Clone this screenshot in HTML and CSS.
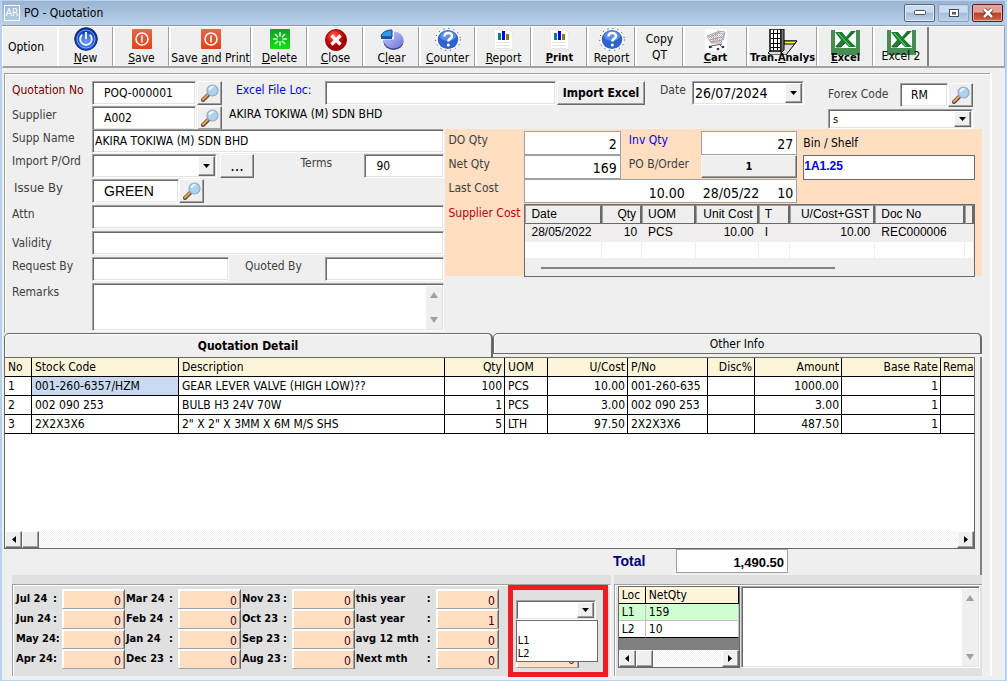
FILE: index.html
```html
<!DOCTYPE html>
<html lang="en">
<head>
<meta charset="utf-8">
<title>PO - Quotation</title>
<link rel="stylesheet" href="styles.css">
</head>
<body>
<svg class="defs" aria-hidden="true">
  <defs>
    <radialGradient id="gBlue" cx=".5" cy=".6"><stop offset="0" stop-color="#6fa0ff"/><stop offset=".6" stop-color="#2f62dc"/><stop offset="1" stop-color="#0a2f94"/></radialGradient>
    <radialGradient id="gRed" cx=".4" cy=".3"><stop offset="0" stop-color="#ff6a5c"/><stop offset=".6" stop-color="#dd1712"/><stop offset="1" stop-color="#a00604"/></radialGradient>
    <linearGradient id="gOrange" x2="0" y2="1"><stop offset="0" stop-color="#e2694a"/><stop offset="1" stop-color="#e2401a"/></linearGradient>
    <linearGradient id="gGreen" x2="0" y2="1"><stop offset="0" stop-color="#169c2c"/><stop offset="1" stop-color="#12e012"/></linearGradient>
    <linearGradient id="gPie" x2="1" y2="1"><stop offset="0" stop-color="#c9ccff"/><stop offset="1" stop-color="#6f74d8"/></linearGradient>
    <pattern id="dither" width="2" height="2" patternUnits="userSpaceOnUse"><rect width="2" height="2" fill="#1fa83a"/><rect width="1" height="1" fill="#6a746a"/><rect x="1" y="1" width="1" height="1" fill="#6a746a"/></pattern>
    <pattern id="dither2" width="2" height="2" patternUnits="userSpaceOnUse"><rect width="2" height="2" fill="#fff"/><rect width="1" height="1" fill="#aaa"/><rect x="1" y="1" width="1" height="1" fill="#ccc"/></pattern>
  </defs>
  <symbol id="i-lens" viewBox="0 0 18 18">
    <path d="M2 16l5-5" stroke="#6b4a33" stroke-width="4" stroke-linecap="round"/>
    <path d="M2 15.500l4.500-4.500" stroke="#e6a468" stroke-width="2" stroke-linecap="round"/>
    <circle cx="11.500" cy="6.500" r="5.500" fill="#a9d3f0" stroke="#9aa8b8" stroke-width="1.200"/>
    <path d="M8.500 6a3.500 3.500 0 0 1 4-3" stroke="#eaf7ff" stroke-width="2" fill="none"/>
  </symbol>
  <symbol id="i-power" viewBox="0 0 24 24">
    <circle cx="12" cy="12" r="11.300" fill="url(#gBlue)" stroke="#082c78"/>
    <circle cx="12" cy="12" r="9" fill="none" stroke="#7da9f4"/>
    <path d="M8.200 7.800a5.800 5.800 0 1 0 7.600 0M12 5v7" fill="none" stroke="#e8f2ff" stroke-width="2"/>
  </symbol>
  <symbol id="i-save" viewBox="0 0 20 20">
    <rect width="20" height="20" rx="1" fill="url(#gOrange)"/>
    <circle cx="10" cy="10" r="6" fill="none" stroke="#fff" stroke-width="1.500"/><path d="M10 6.500v7" stroke="#fff" stroke-width="1.500"/>
  </symbol>
  <symbol id="i-del" viewBox="0 0 20 20">
    <rect width="20" height="20" rx="1" fill="url(#gGreen)"/>
    <path d="M10 3v4.500M10 12.500V17M3 10h4.500M12.500 10H17M5 5l3.200 3.200M11.800 11.800L15 15M15 5l-3.200 3.200M8.200 11.800L5 15" stroke="#d9ffd9" stroke-width="1.500"/>
  </symbol>
  <symbol id="i-close" viewBox="0 0 22 22">
    <circle cx="11" cy="11" r="10.500" fill="url(#gRed)" stroke="#8d0d0a"/>
    <path d="M6.500 6.500l9 9M15.500 6.500l-9 9" stroke="#fff" stroke-width="3.200"/>
  </symbol>
  <symbol id="i-pie" viewBox="0 0 24 22">
    <ellipse cx="13.500" cy="12.500" rx="10" ry="8.500" fill="#3e418e"/>
    <ellipse cx="13.500" cy="11" rx="10" ry="8.500" fill="url(#gPie)"/>
    <path d="M14 10.500V1H3v9.500z" fill="#efefef"/>
    <path d="M12 8V1C6 1 1.500 3.500 1 7.500z" fill="#2d9be8" stroke="#17437f"/><path d="M1 7.500v2.500h11V8z" fill="#12569c"/>
  </symbol>
  <symbol id="i-help" viewBox="0 0 26 23">
    <ellipse cx="13" cy="11.500" rx="12.300" ry="11" fill="#fff" stroke="#1c2240" stroke-dasharray="1 4"/>
    <ellipse cx="13" cy="11.500" rx="10.300" ry="9.500" fill="#2f63cf"/>
    <ellipse cx="13" cy="8" rx="8" ry="5" fill="#5a8de6"/>
    <path d="M9.500 8.500c0-4.500 7.500-4.500 7.500-.500 0 2.800-3.700 2.500-3.700 5.500" fill="none" stroke="#fff" stroke-width="2.500"/><circle cx="13.300" cy="17" r="1.500" fill="#fff"/>
  </symbol>
  <symbol id="i-chart" viewBox="0 0 20 22">
    <path d="M0 0h15l4 4v17H0z" fill="#fff" stroke="#ddd"/>
    <path d="M2 13.500h14M2 16.500h14M2 19.500h14" stroke="#e4e4e4"/>
    <rect x="4" y="4" width="3" height="7" fill="#008080"/><rect x="8" y="2" width="3" height="9" fill="#00f"/><rect x="12" y="5" width="3" height="6" fill="#808000"/>
  </symbol>
  <symbol id="i-cart" viewBox="0 0 22 22">
    <rect width="22" height="22" fill="#fff"/>
    <path d="M2 7l10-4 7 2-3 9H6z" fill="url(#dither2)" stroke="#aaa"/>
    <path d="M12 2l8 1-2 8M4 8l10-4M5 11l12-3M6 13l11-2" fill="none" stroke="#89a4cf"/>
    <path d="M8 6l1 8M12 5v9" stroke="#dd9b86"/>
    <path d="M17 15l-11 2 1 2M15 16l3 3" fill="none" stroke="#555"/><circle cx="5" cy="18" r="1.300" fill="#334"/><circle cx="13" cy="20" r="1.300" fill="#334"/><circle cx="18" cy="18" r="1.300" fill="#334"/>
  </symbol>
  <symbol id="i-tran" viewBox="0 0 32 26">
    <path d="M1 24l12-12h17L19 26H4z" fill="#ddd" stroke="#000"/>
    <path d="M17 12h13l-3 3H17z" fill="#ff0" stroke="#000"/>
    <path d="M3 0h11v22H3z" fill="#fff" stroke="#000" stroke-width="1.500"/>
    <path d="M4 4.500h9M4 9.500h9M4 14.500h9M4 18.500h9M6.500 1v20M10.500 1v20" stroke="#000"/>
    <path d="M14 0h3v21l-3 3z" fill="#777" stroke="#000"/>
  </symbol>
  <symbol id="i-xl" viewBox="0 0 29 25">
    <path d="M0 0h29v25H0z" fill="url(#dither)" shape-rendering="crispEdges"/><path d="M4 0h21v18H4z" fill="#fff"/>
    <path d="M4 2h7l4 5 5-6h5l-8 8 8 8h-7l-4-4-4 4H4l6-7z" fill="#16812b"/>
    <path d="M5 17h5l4-4M17 8l6-7" stroke="#444" fill="none"/><path d="M7 3l12 13" stroke="#8dd19a"/>
  </symbol>
  <symbol id="i-down" viewBox="0 0 7 4"><path d="M0 0h7L3.500 4z"/></symbol>
  <symbol id="i-up" viewBox="0 0 8 6"><path d="M0 6h8L4 0z"/></symbol>
  <symbol id="i-fall" viewBox="0 0 8 6"><path d="M0 0h8L4 6z"/></symbol>
  <symbol id="i-left" viewBox="0 0 4 7"><path d="M4 0v7L0 3.500z"/></symbol>
  <symbol id="i-right" viewBox="0 0 4 7"><path d="M0 0v7l4-3.500z"/></symbol>
</svg>

<div class="window">
  <header class="titlebar">
    <span class="app-icon">AR</span>
    <h1>PO - Quotation</h1>
    <div class="win-buttons">
      <button class="win-btn" aria-label="Minimize"><svg width="12" height="6"><rect x=".5" y=".5" width="11" height="4" rx="1" fill="#fff" stroke="#454c5a"/></svg></button>
      <button class="win-btn dim" aria-label="Maximize"><svg width="10" height="8"><rect x=".5" y=".5" width="9" height="7" fill="#fff" stroke="#454c5a"/><rect x="3.500" y="3.500" width="3" height="1.500" fill="#9ab" stroke="#454c5a"/></svg></button>
      <button class="win-btn red" aria-label="Close window"><svg width="12" height="10"><path d="M2 1l8 8M10 1L2 9" stroke="#4b2a2a" stroke-width="4"/><path d="M2 1l8 8M10 1L2 9" stroke="#fff" stroke-width="2.500"/></svg></button>
    </div>
  </header>

  <nav class="toolbar" aria-label="Option">
    <span class="tool-title">Option</span>
    <button class="tool"><svg width="24" height="24"><use href="#i-power"/></svg><span><u>N</u>ew</span></button>
    <button class="tool"><svg width="20" height="20"><use href="#i-save"/></svg><span><u>S</u>ave</span></button>
    <button class="tool w82"><svg width="20" height="20"><use href="#i-save"/></svg><span>Save <u>a</u>nd Print</span></button>
    <button class="tool"><svg width="20" height="20"><use href="#i-del"/></svg><span><u>D</u>elete</span></button>
    <button class="tool"><svg width="22" height="22"><use href="#i-close"/></svg><span><u>C</u>lose</span></button>
    <button class="tool"><svg width="24" height="22"><use href="#i-pie"/></svg><span>C<u>l</u>ear</span></button>
    <button class="tool"><svg width="26" height="23"><use href="#i-help"/></svg><span><u>C</u>ounter</span></button>
    <button class="tool"><svg width="19" height="22" viewBox="0 0 19 22"><use href="#i-chart" width="20" height="22"/></svg><span><u>R</u>eport</span></button>
    <button class="tool strong"><svg width="19" height="22" viewBox="0 0 19 22"><use href="#i-chart" width="20" height="22"/></svg><span><u>P</u>rint</span></button>
    <button class="tool w48"><svg width="26" height="23"><use href="#i-help"/></svg><span>Report</span></button>
    <button class="tool w48 text-only"><span>Copy<br>QT</span></button>
    <button class="tool w64 strong"><svg width="22" height="22"><use href="#i-cart"/></svg><span><u>C</u>art</span></button>
    <button class="tool w70 strong"><svg width="32" height="26"><use href="#i-tran"/></svg><span>Tran.<u>A</u>nalys</span></button>
    <button class="tool strong"><svg width="29" height="25"><use href="#i-xl"/></svg><span><u>E</u>xcel</span></button>
    <button class="tool last"><svg width="29" height="25"><use href="#i-xl"/></svg><span>Excel 2</span></button>
  </nav>

  <main class="page">
    <form class="form">
      <div class="top">
        <div class="top-main">
          <div class="row">
            <label class="lab maroon" for="qno">Quotation No</label>
            <input class="box w103 pad" id="qno" value="POQ-000001">
            <button type="button" class="btn lens" aria-label="Find quotation"><svg width="18" height="18"><use href="#i-lens"/></svg></button>
            <label class="lab-in blue" for="loc">Excel File Loc:</label>
            <input class="box grow" id="loc">
            <button type="button" class="btn import">Import Excel</button>
            <label class="lab-date" for="date">Date</label>
            <span class="combo w112 big"><select id="date"><option>26/07/2024</option></select><i><svg width="7" height="4"><use href="#i-down"/></svg></i></span>
          </div>
          <div class="row">
            <label class="lab" for="sup">Supplier</label>
            <input class="box w103 pad" id="sup" value="A002">
            <button type="button" class="btn lens" aria-label="Find supplier"><svg width="18" height="18"><use href="#i-lens"/></svg></button>
            <span class="sup-name">AKIRA TOKIWA (M) SDN BHD</span>
          </div>
        </div>
        <div class="forex">
          <div class="row">
            <label class="lab-forex" for="fx">Forex Code</label>
            <input class="box w48 pad-s" id="fx" value="RM">
            <button type="button" class="btn lens" aria-label="Find currency"><svg width="18" height="18"><use href="#i-lens"/></svg></button>
          </div>
          <span class="combo low"><select aria-label="Currency name"><option>s</option></select><i><svg width="7" height="4"><use href="#i-down"/></svg></i></span>
        </div>
      </div>

      <div class="middle">
        <div class="fields">
          <div class="group tight">
            <div class="row"><label class="lab" for="sname">Supp Name</label><input class="box grow" id="sname" value="AKIRA TOKIWA (M) SDN BHD"></div>
            <div class="row">
              <label class="lab snug" for="imp">Import P/Ord</label>
              <span class="combo w125"><select id="imp"><option></option></select><i><svg width="7" height="4"><use href="#i-down"/></svg></i></span>
              <button type="button" class="btn dots">...</button>
              <label class="lab-terms" for="terms">Terms</label><input class="box w80 pad" id="terms" value="90">
            </div>
            <div class="row"><label class="lab large" for="iss">Issue By</label><input class="box w87 pad arial" id="iss" value="GREEN"><button type="button" class="btn lens" aria-label="Find issuer"><svg width="18" height="18"><use href="#i-lens"/></svg></button></div>
          </div>
          <div class="group">
            <div class="row"><label class="lab" for="attn">Attn</label><input class="box grow" id="attn"></div>
            <div class="row"><label class="lab low-lab" for="val">Validity</label><input class="box grow" id="val"></div>
            <div class="row"><label class="lab" for="req">Request By</label><input class="box w136" id="req"><label class="lab-quoted" for="quo">Quoted By</label><input class="box grow" id="quo"></div>
            <div class="row tall"><label class="lab" for="rem">Remarks</label><span class="area"><textarea id="rem"></textarea><i class="vbar"><svg width="8" height="6"><use href="#i-up"/></svg><svg width="8" height="6"><use href="#i-fall"/></svg></i></span></div>
          </div>
        </div>

        <section class="stock">
          <div class="stock-grid">
            <label for="do">DO Qty</label><input class="flat" id="do" value="2">
            <label class="blue in" for="inv">Inv Qty</label><input class="flat" id="inv" value="27">
            <label class="dark" for="bin">Bin / Shelf</label>
            <label for="net">Net Qty</label><input class="flat" id="net" value="169">
            <span class="in">PO B/Order</span><button type="button" class="btn border-btn">1</button>
            <input class="flat bin" id="bin" value="1A1.25">
            <span>Last Cost</span>
            <div class="last-cost"><span>10.00</span><span>28/05/22</span><span>10</span></div>
          </div>
          <div class="sup-cost">
            <span class="red">Supplier Cost</span>
            <div class="cost-box">
              <table class="cost">
                <colgroup><col class="c1"><col class="c2"><col class="c3"><col class="c4"><col class="c5"><col class="c6"><col class="c7"><col class="c8"></colgroup>
                <thead><tr><th>Date</th><th class="r">Qty</th><th>UOM</th><th class="r">Unit Cost</th><th>T</th><th class="r">U/Cost+GST</th><th>Doc No</th><th></th></tr></thead>
                <tbody><tr class="sel"><td>28/05/2022</td><td class="r">10</td><td>PCS</td><td class="r">10.00</td><td>I</td><td class="r">10.00</td><td>REC000006</td><td></td></tr>
                <tr><td></td><td></td><td></td><td></td><td></td><td></td><td></td><td></td></tr></tbody>
              </table>
              <div class="thin-bar"><i></i></div>
            </div>
          </div>
        </section>
      </div>
    </form>

    <div class="tabs" role="tablist">
      <button class="tab on" role="tab" aria-selected="true">Quotation Detail</button>
      <button class="tab" role="tab" aria-selected="false">Other Info</button>
    </div>

    <section class="detail">
      <div class="grid-box">
        <div class="grid-body">
          <table class="lines">
            <colgroup><col class="l1"><col class="l2"><col class="l3"><col class="l4"><col class="l5"><col class="l6"><col class="l7"><col class="l8"><col class="l9"><col class="l10"><col class="l11"></colgroup>
            <thead><tr><th>No</th><th>Stock Code</th><th>Description</th><th class="r">Qty</th><th>UOM</th><th class="r">U/Cost</th><th>P/No</th><th class="r">Disc%</th><th class="r">Amount</th><th class="r">Base Rate</th><th>Rema</th></tr></thead>
            <tbody>
              <tr><td>1</td><td class="picked">001-260-6357/HZM</td><td>GEAR LEVER VALVE (HIGH LOW)??</td><td class="r">100</td><td>PCS</td><td class="r">10.00</td><td>001-260-635</td><td></td><td class="r">1000.00</td><td class="r">1</td><td></td></tr>
              <tr><td>2</td><td>002 090 253</td><td>BULB H3 24V 70W</td><td class="r">1</td><td>PCS</td><td class="r">3.00</td><td>002 090 253</td><td></td><td class="r">3.00</td><td class="r">1</td><td></td></tr>
              <tr><td>3</td><td>2X2X3X6</td><td>2" X 2" X 3MM X 6M M/S SHS</td><td class="r">5</td><td>LTH</td><td class="r">97.50</td><td>2X2X3X6</td><td></td><td class="r">487.50</td><td class="r">1</td><td></td></tr>
            </tbody>
          </table>
        </div>
        <div class="hbar"><button class="btn" aria-label="Scroll left"><svg width="4" height="7"><use href="#i-left"/></svg></button><span class="btn thumb"></span><button class="btn end" aria-label="Scroll right"><svg width="4" height="7"><use href="#i-right"/></svg></button></div>
      </div>
      <div class="total"><label for="tot">Total</label><input class="flat" id="tot" value="1,490.50"></div>
    </section>

    <div class="bottom">
      <section class="stats">
        <div class="stats-in">
          <div class="stat-grid">
            <label for="s1">Jul 24<b>:</b></label><input id="s1" value="0"><label for="s2">Mar 24<b>:</b></label><input id="s2" value="0"><label for="s3">Nov 23<b>:</b></label><input id="s3" value="0"><label for="s4">this year<b>:</b></label><input id="s4" value="0">
            <label for="s5">Jun 24<b>:</b></label><input id="s5" value="0"><label for="s6">Feb 24<b>:</b></label><input id="s6" value="0"><label for="s7">Oct 23<b>:</b></label><input id="s7" value="0"><label for="s8">last year<b>:</b></label><input id="s8" value="1">
            <label for="s9">May 24<b>:</b></label><input id="s9" value="0"><label for="s10">Jan 24<b>:</b></label><input id="s10" value="0"><label for="s11">Sep 23<b>:</b></label><input id="s11" value="0"><label for="s12">avg 12 mth<b>:</b></label><input id="s12" value="0">
            <label for="s13">Apr 24<b>:</b></label><input id="s13" value="0"><label for="s14">Dec 23<b>:</b></label><input id="s14" value="0"><label for="s15">Aug 23<b>:</b></label><input id="s15" value="0"><label for="s16">Next mth<b>:</b></label><input id="s16" value="0">
          </div>
          <div class="marked">
            <span class="combo low"><select aria-label="Location"><option></option></select><i><svg width="7" height="4"><use href="#i-down"/></svg></i></span>
            <div class="under"><input class="peach" aria-label="Location quantity" value="0"></div>
            <select class="droplist" size="3" aria-label="Location list"><option></option><option>L1</option><option>L2</option></select>
          </div>
        </div>
      </section>
      <section class="locs">
        <div class="locs-in">
          <div class="loc-box">
            <table class="loc-table">
              <thead><tr><th class="k">Loc</th><th>NetQty</th></tr></thead>
              <tbody><tr class="green"><td>L1</td><td>159</td></tr><tr><td>L2</td><td>10</td></tr></tbody>
            </table>
            <div class="void"></div>
            <div class="hbar"><button class="btn" aria-label="Scroll left"><svg width="4" height="7"><use href="#i-left"/></svg></button><span class="btn thumb"></span><button class="btn end" aria-label="Scroll right"><svg width="4" height="7"><use href="#i-right"/></svg></button></div>
          </div>
          <span class="area"><textarea aria-label="Notes"></textarea><i class="vbar"><svg width="8" height="6"><use href="#i-up"/></svg><svg width="8" height="6"><use href="#i-fall"/></svg></i></span>
        </div>
      </section>
    </div>
  </main>
</div>
</body>
</html>
```

FILE: styles.css
```css
* { box-sizing: border-box; }
body { margin: 0; font: 12px/18px "DejaVu Sans Condensed", "Noto Sans", sans-serif; color: #000; background: #efefef; }
button, input, select, textarea { font: inherit; color: inherit; margin: 0; border-radius: 0; outline: 0; }
svg { display: block; }
.defs { position: absolute; width: 0; height: 0; }
button { padding: 0; }
table { border-collapse: separate; border-spacing: 0; table-layout: fixed; width: 100%; }
th { font-weight: 400; text-align: left; }
.r { text-align: right; }

.window { min-height: 100vh; display: flex; flex-direction: column; border: solid #b9d1ea; border-width: 1px 2px; background: #efefef; }

/* title bar */
.titlebar { display: flex; align-items: center; height: 25px; padding: 0 2px; flex: none; background: linear-gradient(#98b4d2, #b9d1ea); border-bottom: 1px solid #8a97a5; }
.titlebar h1 { margin: 0 auto 0 4px; font-size: 12px; font-weight: 400; }
.app-icon { width: 16px; height: 16px; border: 1px solid #fff; color: #fff; font-size: 10px; line-height: 14px; text-align: center; }
.win-buttons { display: flex; gap: 3px; }
.win-btn { width: 31px; height: 18px; display: flex; align-items: center; justify-content: center; border: 1px solid #55697f; border-radius: 2px; background: linear-gradient(#cbdcee 45%, #a3bcd8 50%, #bdd3ea); box-shadow: inset 0 0 0 1px #dfeaf6; }
.win-btn.dim { border-color: #8aa3c0; box-shadow: inset 0 0 0 1px #bdd0e6; }
.win-btn.red { border-color: #5b1a1f; background: linear-gradient(#e0a296 45%, #bb3a24 50%, #d3674b); box-shadow: inset 0 0 0 1px #e5aea5; }

/* toolbar */
.toolbar { display: flex; height: 42px; flex: none; margin: 0; border: solid; border-width: 1px 1px 2px; border-color: #fff #a0a0a0 #a0a0a0 #fff; }
.tool-title { width: 54px; padding: 11px 5px; }
.tool { width: 56px; min-width: 0; display: flex; flex-direction: column; justify-content: flex-end; align-items: center; border: solid; border-width: 0 1px 0 2px; border-color: #fff #a0a0a0 #fff #fff; background: #efefef; line-height: 16px; white-space: nowrap; }
.tool svg { flex: none; margin: 1px 0 -1px; }
.tool svg[height="20"] { margin-bottom: 1px; }
.tool span { position: relative; text-align: center; }
.tool.strong span { font-weight: 700; font-size: 11px; }
.tool svg[height="25"], .tool svg[height="26"] { margin-bottom: -5px; }
.w82 { width: 82px; } .w64 { width: 64px; } .w70 { width: 70px; } .tool.w48 { width: 48px; }
.tool.text-only { justify-content: center; }
.tool.last { border-right: 2px solid #808080; }
.tool.last svg { margin-bottom: -7px; }
.tool.last span { padding-bottom: 2px; }

/* shared controls */
.box { height: 24px; min-width: 0; padding: 0 2px; background: #fff; border: 1px solid; border-color: #a0a0a0 #fff #fff #a0a0a0; box-shadow: inset 1px 1px #696969, inset -1px -1px #e3e3e3; }
.pad { padding-left: 11px; } .pad-s { padding-left: 10px; }
.grow { flex: 1; }
.w48 { width: 48px; } .w80 { width: 80px; } .w87 { width: 87px; } .w103 { width: 104px; } .w136 { width: 137px; }
.arial { font: 14px "Liberation Sans", sans-serif; }
.btn { display: flex; align-items: center; justify-content: center; background: #efefef; border: 1px solid; border-color: #fff #696969 #696969 #fff; box-shadow: inset -1px -1px #a0a0a0; }
.lens { width: 25px; height: 24px; flex: none; }
.combo { position: relative; display: block; height: 24px; border: 1px solid; border-color: #a0a0a0 #fff #fff #a0a0a0; }
.combo select { appearance: none; width: 100%; height: 100%; padding: 0 18px 0 3px; border: 1px solid; border-color: #696969 #e3e3e3 #e3e3e3 #696969; background: #fff; display: block; }
.combo i { position: absolute; top: 1px; right: 1px; bottom: 1px; width: 17px; display: flex; align-items: center; justify-content: center; pointer-events: none; background: #efefef; border: 1px solid; border-color: #fff #696969 #696969 #fff; box-shadow: inset -1px -1px #a0a0a0; }
.combo.low { height: 20px; }
.combo.low select { font-size: 11px; }
.combo.big select { font-size: 14px; padding-left: 1px; }
.w112 { width: 112px; } .w125 { width: 125px; }
.flat { height: 24px; min-width: 0; width: 100%; padding: 2px 3px 0; background: #fff; border: 1px solid #a0a0a0; text-align: right; font-size: 14px; }
.area { flex: 1; display: flex; min-width: 0; background: #fff; border: 1px solid; border-color: #a0a0a0 #fff #fff #a0a0a0; box-shadow: inset 1px 1px #696969, inset -1px -1px #e3e3e3; padding: 2px 1px 1px 2px; }
.area textarea { flex: 1; min-width: 0; border: 0; resize: none; overflow: hidden; background: #fff; padding: 0; }
.vbar { width: 16px; display: flex; flex-direction: column; justify-content: space-between; align-items: center; padding: 6px 0; background: #efefef; fill: #a0a0a0; }
.maroon { color: #800000; } .blue { color: #0000f0; } .red { color: #c00010; }

/* form */
.page { flex: 1; display: flex; flex-direction: column; margin: 5px 13px 4px 2px; border-right: 2px solid #fff; }
.form { border: solid #a0a0a0; border-width: 1px 0 0 1px; box-shadow: inset 1px 1px #fff; padding: 7px 8px 0 7px; color: #404040; }
.form input, .form select, .sup-name { color: #000; }
.form #bin { color: #0000f0; }
.row { display: flex; align-items: flex-start; }
.lab { width: 80px; flex: none; }
.lab.large { padding-left: 2px; font-size: 13px; }
.snug { line-height: 15px; }
.low-lab { padding-top: 3px; }
.top { display: flex; gap: 24px; padding-right: 9px; height: 48px; }
.top-main { flex: 1; min-width: 0; display: flex; flex-direction: column; gap: 1px; }
.top-main .lens { margin-left: 1px; }
.lab-in { width: 103px; padding-left: 14px; flex: none; }
.import { width: 88px; height: 24px; margin-left: 1px; color: #000; font-weight: 700; font-size: 12px; flex: none; }
.lab-date { width: 47px; padding-left: 15px; flex: none; }
.sup-name { padding-left: 7px; line-height: 16px; }
.forex { width: 145px; padding-top: 2px; display: flex; flex-direction: column; gap: 2px; }
.lab-forex { flex: 1; padding-top: 2px; }
.middle { display: flex; gap: 1px; }
.fields { flex: 432; min-width: 0; display: flex; flex-direction: column; gap: 2px; padding-bottom: 2px; }
.group { display: flex; flex-direction: column; gap: 2px; }
.group.tight { gap: 1px; }
.dots { width: 34px; height: 24px; margin-left: 3px; font-size: 16px; color: #000; }
.lab-terms { margin-left: auto; width: 64px; }
.lab-quoted { width: 96px; padding-left: 16px; }
.tall .area { height: 48px; }

/* stock panel */
.stock { flex: 526; min-width: 0; align-self: flex-start; background: #ffdec1; padding: 2px 7px 2px 3px; height: 147px; }
.stock-grid { display: grid; grid-template-columns: 76px 96fr 80px 96fr 6px 171fr; grid-template-rows: 24px 24px 25px; }
.stock-grid .in { padding-left: 8px; }
.stock-grid .dark { grid-column: 6; color: #000; padding-top: 3px; }
.stock-grid .bin { grid-column: 6; height: 25px; text-align: left; font: 700 12px "Liberation Sans", sans-serif; padding: 0 0 4px; border-color: #696969; }
.border-btn { height: 23px; color: #000; font-weight: 700; font-size: 11px; }
.last-cost { grid-column: 2 / 5; display: flex; justify-content: flex-end; gap: 18px; height: 24px; padding: 4px 3px 0; background: #fff; border: 1px solid #a0a0a0; font-size: 14px; color: #000; }
.sup-cost { display: grid; grid-template-columns: 76px 1fr; white-space: nowrap; }
.cost-box { border: 1px solid #696969; background: #fff; color: #000; font: 12px/17px "Liberation Sans", sans-serif; }
.cost th { height: 19px; padding: 0 4px 0 5px; background: #efefef; border: solid; border-width: 1px 2px 1px 1px; border-color: #a0a0a0 #696969 #696969 #a0a0a0; }
.cost td { height: 17px; padding: 0 4px 0 6px; border: solid #efefef; border-width: 0 1px 1px 0; }
.cost .sel td { background: #f1eef0; }
.c1 { width: 17%; } .c2 { width: 9%; } .c3 { width: 12%; } .c4 { width: 14%; } .c5 { width: 7%; } .c6 { width: 19%; } .c7 { width: 20%; }
.thin-bar { height: 17px; padding: 8px 139px 0 16px; background: #efefef; }
.thin-bar i { display: block; height: 2px; background: #858585; }

/* tabs */
.tabs { display: flex; height: 24px; margin-right: 8px; flex: none; }
.tab { flex: 1; background: #efefef; border: 1px solid #696969; border-right-width: 2px; border-radius: 5px 5px 0 0; height: 21px; box-shadow: inset 1px 1px #fff; }
.tab.on { height: 24px; border-bottom: 0; font-weight: 700; }

/* line grid */
.detail { flex: 1; display: flex; flex-direction: column; margin-right: 8px; padding-right: 5px; border-right: 2px solid #808080; }
.grid-box { flex: 1; display: flex; flex-direction: column; border: 1px solid #696969; background: #fff; }
.grid-body { flex: 1; overflow: hidden; }
.lines th, .lines td { height: 19px; line-height: 18px; padding: 0 2px 0 3px; border: solid #000; border-width: 0 1px 1px 0; white-space: nowrap; }
.lines th { background: #fdf5d9; }
.lines .picked { background: #c8d9f1; }
.lines th:last-child, .lines td:last-child { border-right: 0; padding-right: 0; padding-left: 2px; }
.l1 { width: 27px; } .l2 { width: 147px; } .l4 { width: 60px; } .l5 { width: 43px; } .l6 { width: 80px; } .l7 { width: 80px; } .l8 { width: 47px; } .l9 { width: 87px; } .l10 { width: 99px; } .l11 { width: 33px; }
.hbar { display: flex; height: 17px; flex: none; background: repeating-conic-gradient(#fff 0 25%, #f0f0f0 0 50%) 0 0 / 2px 2px; }
.hbar .btn { width: 17px; }
.hbar .end { margin-left: auto; }
.total { display: flex; height: 26px; flex: none; padding-left: 609px; }
.total label { width: 63px; padding-top: 3px; color: #000080; font: 700 14px/18px "Liberation Sans", sans-serif; }
.total .flat { width: 112px; font: 700 13px "Liberation Sans", sans-serif; }

/* bottom panels */
.bottom { display: flex; gap: 3px; margin: 0 8px 0 8px; flex: none; }
.stats, .locs { background: #e0e0e0; padding-top: 9px; }
.stats { flex: 600; min-width: 0; }
.locs { flex: 369; min-width: 0; }
.stats-in, .locs-in { height: 92px; display: flex; border: solid #a0a0a0; border-width: 1px 0 0 1px; box-shadow: inset 1px 1px #fff; }
.stats-in { gap: 9px; padding-left: 3px; border-right: 1px solid #fff; }
.stat-grid { flex: 1; display: grid; grid-template-columns: 46px 63fr 53px 63fr 51px 63fr 81px 63fr; grid-auto-rows: 20px; padding-top: 4px; }
.stat-grid label { display: flex; justify-content: space-between; padding-right: 5px; font: 700 11px/20px "DejaVu Sans Condensed", "Noto Sans", sans-serif; white-space: nowrap; }
.stat-grid label:nth-child(8n + 3), .stat-grid label:nth-child(8n + 5), .stat-grid label:nth-child(8n + 7) { padding-left: 1px; }
.stat-grid input, .peach { width: 100%; min-width: 0; height: 20px; padding: 3px 3px 0; text-align: right; color: #400020; background: #ffdec1; border: 1px solid; border-color: #fff #696969 #a0a0a0 #fff; box-shadow: inset 1px 1px #fff, inset -1px 0 #a0a0a0; }
.marked { position: relative; width: 100px; flex: none; height: 92px; border: 5px solid #ed1c24; padding: 10px 7px 0 3px; margin-right: 2px; }
.marked .combo { width: 80px; }
.under { padding-top: 28px; width: 63px; }
.droplist { position: absolute; top: 30px; left: 3px; width: 82px; height: 42px; padding: 0; overflow: hidden; border: 1px solid #696969; background: #fff; font-size: 11px; line-height: 13px; appearance: none; }
.droplist option { height: 13px; min-height: 13px; padding: 0 1px; }
.locs-in { padding: 1px 2px 8px 3px; gap: 1px; }
.loc-box { width: 122px; flex: none; display: flex; flex-direction: column; border: 1px solid #696969; background: #fff; }
.loc-table th, .loc-table td { height: 17px; line-height: 16px; padding: 0 3px; border: solid #c0c0c0; border-width: 0 1px 1px 0; }
.loc-table th { background: #fdf5d9; border-color: #000; }
.loc-table .k { width: 27px; }
.loc-table .green td { background: #d0ffd0; }
.loc-table tr:last-child td { border-bottom-color: #000; }
.void { flex: 1; background: #808080; }
```
